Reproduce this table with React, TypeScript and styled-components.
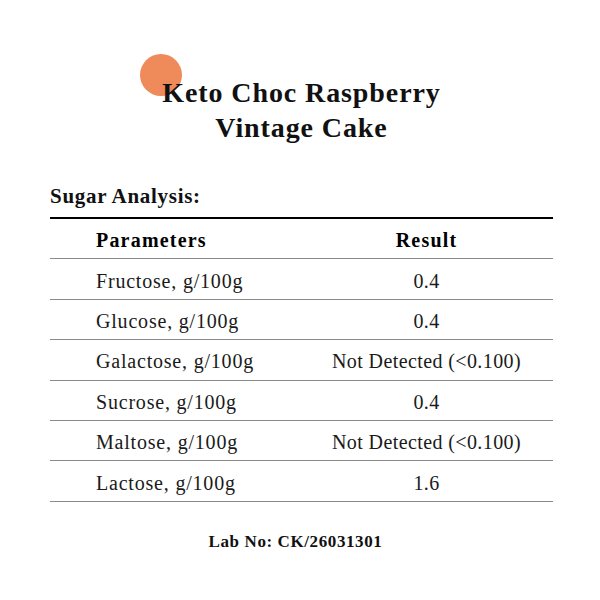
import React from "react";
import styled, { createGlobalStyle } from "styled-components";

const Global = createGlobalStyle`
  html, body { margin: 0; padding: 0; background: #fff; }
  body { font-family: "Liberation Serif", "DejaVu Serif", serif; color: #111; }
`;

const Page = styled.div`
  width: 600px;
  height: 600px;
  box-sizing: border-box;
  padding: 75px 47px 0 50px;
  display: flex;
  flex-direction: column;
`;

const TitleWrap = styled.div`
  position: relative;
  display: flex;
  justify-content: center;
`;

const Dot = styled.span`
  position: absolute;
  left: 90px;
  top: -21px;
  width: 42px;
  height: 42px;
  border-radius: 50%;
  background: #ef8a5b;
`;

const Title = styled.h1`
  position: relative;
  margin: 0;
  font-size: 28px;
  line-height: 35px;
  font-weight: bold;
  text-align: center;
  letter-spacing: 0.9px;
`;

const Section = styled.h2`
  margin: 39px 0 0 0;
  font-size: 21px;
  line-height: 24px;
  font-weight: bold;
  letter-spacing: 0.7px;
`;

const Table = styled.div`
  margin-top: 9px;
  border-top: 2.5px solid #000;
  display: grid;
  grid-template-columns: 250px 1fr;
`;

const Cell = styled.div<{ $head?: boolean; $right?: boolean }>`
  height: 40.4px;
  box-sizing: border-box;
  border-bottom: 1px solid #8a8a8a;
  display: flex;
  align-items: center;
  justify-content: ${(p) => (p.$right ? "center" : "flex-start")};
  padding-left: ${(p) => (p.$right ? "0" : "46px")};
  padding-top: 4px;
  font-size: 20px;
  letter-spacing: ${(p) => (p.$head ? "1.2px" : p.$right ? "0.4px" : "0.8px")};
  font-weight: ${(p) => (p.$head ? "bold" : "normal")};
  color: ${(p) => (p.$head ? "#000" : "#1a1a1a")};
`;

const Footer = styled.div`
  margin-top: 30px;
  text-align: center;
  font-size: 17px;
  font-weight: bold;
  letter-spacing: 0.6px;
  padding-right: 12px;
`;

const rows: [string, string][] = [
  ["Fructose, g/100g", "0.4"],
  ["Glucose, g/100g", "0.4"],
  ["Galactose, g/100g", "Not Detected (<0.100)"],
  ["Sucrose, g/100g", "0.4"],
  ["Maltose, g/100g", "Not Detected (<0.100)"],
  ["Lactose, g/100g", "1.6"],
];

export default function App() {
  return (
    <>
      <Global />
      <Page>
        <TitleWrap>
          <Dot />
          <Title>
            Keto Choc Raspberry
            <br />
            Vintage Cake
          </Title>
        </TitleWrap>
        <Section>Sugar Analysis:</Section>
        <Table>
          <Cell $head>Parameters</Cell>
          <Cell $head $right>Result</Cell>
          {rows.map(([a, b]) => (
            <React.Fragment key={a}>
              <Cell>{a}</Cell>
              <Cell $right>{b}</Cell>
            </React.Fragment>
          ))}
        </Table>
        <Footer>Lab No: CK/26031301</Footer>
      </Page>
    </>
  );
}
